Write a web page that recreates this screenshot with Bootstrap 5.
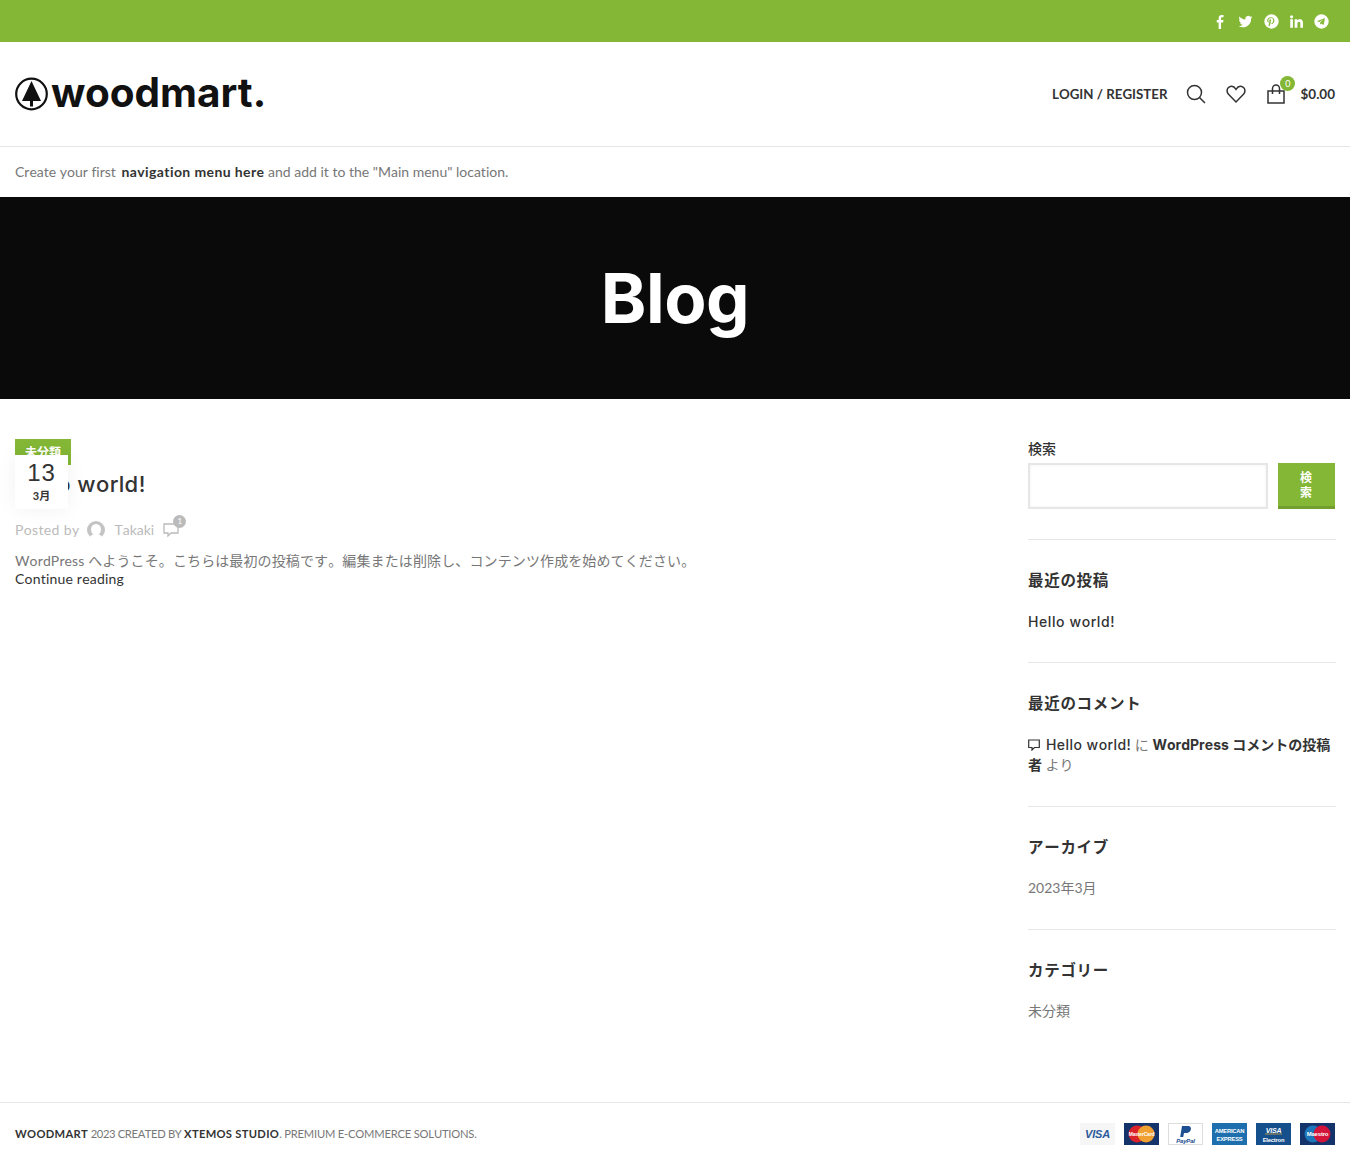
<!DOCTYPE html>
<html lang="ja">
<head>
  <meta charset="UTF-8" />
  <meta name="viewport" content="width=device-width, initial-scale=1.0" />
  <title>Blog – woodmart</title>
  <link rel="stylesheet" href="https://cdn.jsdelivr.net/npm/bootstrap@5.3.3/dist/css/bootstrap.min.css" />
  <style>
    body {
      font-family: Lato, "Noto Sans CJK JP", sans-serif;
      font-size: 14px;
      line-height: 18px;
      color: #777;
      background: #fff;
      min-height: 1165px;
      font-variant-ligatures: none;
      font-kerning: none;
    }
    a { color: #333; text-decoration: none; }
    .wm-topbar { height: 42px; background: #83b735; padding: 0 20px 0 15px; gap: 9px; }
    .wm-topbar svg { width: 15px; height: 15px; fill: #fff; display: block; }
    .wm-social { width: 16.4px; display: flex; justify-content: center; }
    .wm-header { height: 105px; padding: 0 15px; border-bottom: 1px solid #e6e6e6; }
    .wm-logo { gap: 3px; }
    .wm-logo-text {
      font-family: Inter, sans-serif;
      font-weight: 700;
      font-size: 40.5px;
      line-height: 40px;
      color: #111;
      margin-bottom: 3px;
      font-kerning: normal;
    }
    .wm-login { font-size: 13.3px; font-weight: 700; color: #333; margin-right: 19px; }
    .wm-icon { width: 20px; height: 20px; fill: none; stroke: #333; stroke-width: 1.5; display: block; }
    .wm-icon-link { margin-right: 20px; }
    .wm-cart-link { margin-right: 14px; }
    .wm-cart-badge {
      position: absolute; top: -8px; right: -9px;
      width: 15px; height: 15px; border-radius: 50%;
      background: #83b735; color: #fff; font-size: 9px; line-height: 15px; text-align: center;
    }
    .wm-price { font-weight: 700; color: #333; font-size: 13.5px; }
    .wm-menu-hint { height: 50px; padding: 0 15px; }
    .wm-menu-hint a { font-weight: 700; letter-spacing: .4px; margin-left: 2px; }
    .wm-hero { height: 202px; background: #0a0a0a; }
    .wm-hero h1 {
      font-family: Inter, sans-serif;
      font-weight: 700; font-size: 69px; letter-spacing: -.4px; color: #fff; margin: 0;
      font-kerning: normal;
    }
    .wm-main { height: 703px; }
    .wm-content { padding: 40px 15px 0; position: relative; }
    .wm-cat {
      display: inline-block; width: 56px; height: 26px; background: #83b735; color: #fff;
      font-size: 12px; font-weight: 700; text-align: center; line-height: 28px; vertical-align: top;
    }
    .wm-date {
      position: absolute; left: 15px; top: 56px; width: 53px; height: 54px;
      background: #fff; box-shadow: 0 0 20px rgba(0,0,0,.06); text-align: center; color: #333;
    }
    .wm-date-day { font-size: 24px; line-height: 24px; letter-spacing: 1px; padding-top: 6px; font-family: "Liberation Sans", sans-serif; }
    .wm-date-month { font-size: 11px; font-weight: 700; line-height: 14px; margin-top: 4px; }
    .wm-title {
      font-family: Inter, sans-serif; font-weight: 500; font-size: 22px; line-height: 28px;
      color: #333; margin: 5px 0 0; letter-spacing: .45px;
    }
    .wm-meta { color: #bbb; margin-top: 21px; height: 22px; }
    .wm-meta-by { letter-spacing: .35px; }
    .wm-avatar { width: 18px; height: 18px; margin: 0 9px 0 8px; }
    .wm-comments { position: relative; margin-left: 9px; }
    .wm-comments svg { width: 16px; height: 16px; fill: none; stroke: #bbb; stroke-width: 1.3; display: block; }
    .wm-comments span {
      position: absolute; top: -7px; right: -7px; width: 13px; height: 13px; border-radius: 50%;
      background: #bbb; color: #fff; font-size: 8px; line-height: 13px; text-align: center;
    }
    .wm-excerpt { margin: 11px 0 0; letter-spacing: .12px; }
    .wm-excerpt a { letter-spacing: .2px; }
    .wm-side { padding: 40px 14.5px 0 15.5px; }
    .wm-block { border-bottom: 1px solid #e6e6e6; padding-bottom: 30px; margin-bottom: 30px; }
    .wm-block:last-child { border-bottom: 0; }
    .wm-search-label { font-weight: 500; color: #333; display: block; height: 24px; line-height: 20px; }
    .wm-input { width: 240px; height: 46px; border: 2px solid #e6e6e6; border-radius: 0; background: #fff; box-shadow: inset 0 0 3px rgba(0,0,0,.06); }
    .wm-search-btn {
      width: 57px; height: 46px; background: #83b735; color: #fff; border: 0; border-bottom: 3px solid #739f2e;
      border-radius: 0; font-size: 12px; font-weight: 700; line-height: 15px; padding: 0 20px; margin-right: 1px;
    }
    .wm-widget-title { font-size: 15.5px; line-height: 20px; font-weight: 700; color: #333; margin: 0 0 20px; letter-spacing: .7px; }
    .wm-widget-link { display: block; height: 22px; font-family: Inter, sans-serif; font-weight: 500; color: #333; font-size: 14px; line-height: 24px; letter-spacing: .6px; }
    .wm-comment-line { font-size: 14px; line-height: 20px; padding-top: 2px; margin-bottom: 1px; }
    .wm-comment-line a { font-family: Inter, "Noto Sans CJK JP", sans-serif; font-weight: 500; color: #333; }
    .wm-comment-line a.wm-post-link { letter-spacing: .45px; }
    .wm-comment-line a.wm-author { font-weight: 700; }
    .wm-comment-line svg { width: 12px; height: 12px; fill: none; stroke: #333; stroke-width: 1.2; margin-right: 6px; vertical-align: -1px; }
    .wm-plain { line-height: 22px; }
    .wm-footer { height: 63px; border-top: 1px solid #e6e6e6; padding: 0 15px; font-size: 11.2px; letter-spacing: -.2px; }
    .wm-footer b { color: #333; font-weight: 700; letter-spacing: .3px; }
    .wm-footer-created { letter-spacing: -.35px; }
    .wm-pay { gap: 9px; }
    .wm-pay svg { width: 35px; height: 22px; display: block; font-family: "Liberation Sans", sans-serif; font-weight: 700; }
  </style>
</head>
<body>

  <div class="wm-topbar d-flex align-items-center justify-content-end">
    <span class="wm-social"><svg viewBox="0 0 16 16"><path d="M6 16V9H4V6.3h2V4.4C6 2.2 7.300 1 9.300 1c.9 0 1.700.1 1.900.1v2.400H9.900C8.800 3.500 8.600 4 8.600 4.800v1.500h2.600L10.800 9H8.600v7z"/></svg></span>
    <span class="wm-social"><svg viewBox="0 0 24 24"><path d="M23 5.100c-.8.4-1.700.6-2.600.7.900-.6 1.600-1.400 2-2.500-.9.500-1.900.9-2.900 1.100A4.600 4.600 0 0 0 11.700 8.600C7.900 8.400 4.500 6.600 2.300 3.800c-1.200 2.100-.6 4.800 1.400 6.100-.7 0-1.400-.2-2.100-.6 0 2.200 1.600 4.200 3.700 4.600-.7.200-1.400.2-2.100.1.600 1.900 2.300 3.200 4.300 3.200A9.300 9.300 0 0 1 .8 19.100 13 13 0 0 0 20.900 7.500c.9-.6 1.600-1.400 2.100-2.400z"/></svg></span>
    <span class="wm-social"><svg viewBox="0 0 24 24"><path fill-rule="evenodd" d="M12 .5a11.500 11.500 0 1 0 0 23 11.500 11.500 0 0 0 0-23zm.8 14.700c-1 0-1.900-.5-2.300-1.200l-.8 3c-.3 1-.9 2.100-1.400 2.800l-.8-.4c-.1-.9-.1-1.900.1-2.700l1.100-4.700s-.3-.6-.3-1.400c0-1.300.8-2.300 1.700-2.300.8 0 1.200.6 1.200 1.300 0 .8-.5 2-.8 3.100-.2.900.5 1.700 1.400 1.700 1.700 0 2.900-2.100 2.900-4.600 0-1.900-1.300-3.300-3.600-3.300-2.600 0-4.300 2-4.300 4.100 0 .7.200 1.300.6 1.700.2.200.2.300.1.500l-.2.700c-.1.200-.2.300-.5.200-1.200-.5-1.800-1.800-1.800-3.300 0-2.400 2.100-5.300 6.100-5.300 3.300 0 5.500 2.400 5.500 5 0 3.400-1.900 6-4.700 6z"/></svg></span>
    <span class="wm-social"><svg viewBox="0 0 24 24"><path d="M2 8.500h4.300V22H2zM4.100 2a2.500 2.500 0 1 1 0 5 2.500 2.500 0 0 1 0-5zM9 8.500h4v1.900c.6-1.100 2-2.200 4.200-2.200 4.400 0 5.200 2.900 5.200 6.700V22h-4.300v-6.300c0-1.500 0-3.500-2.100-3.500s-2.500 1.700-2.500 3.400V22H9z"/></svg></span>
    <span class="wm-social"><svg viewBox="0 0 24 24"><path fill-rule="evenodd" d="M12 .5a11.500 11.500 0 1 0 0 23 11.500 11.500 0 0 0 0-23zm5.400 7.100-1.900 9c-.1.600-.5.800-1 .5l-2.900-2.100-1.400 1.300c-.2.200-.3.300-.6.300l.2-2.900 5.300-4.800c.2-.2 0-.3-.3-.1l-6.500 4.100-2.800-.9c-.6-.2-.6-.6.100-.9l11-4.200c.5-.2 1 .1.800.7z"/></svg></span>
  </div>

  <header class="wm-header d-flex align-items-center justify-content-between">
    <a class="wm-logo d-flex align-items-center" href="#">
      <svg width="33" height="34" viewBox="0 0 33 34">
        <circle cx="16.500" cy="17" r="15.300" fill="none" stroke="#111" stroke-width="2.200"/>
        <path d="M16.500 4 26 24H18v5.500h-3V24H7z" fill="#111"/>
      </svg>
      <span class="wm-logo-text">woodmart.</span>
    </a>
    <div class="d-flex align-items-center">
      <a class="wm-login" href="#">LOGIN / REGISTER</a>
      <a href="#" class="wm-icon-link"><svg class="wm-icon" viewBox="0 0 20 20"><circle cx="8.500" cy="8.500" r="7"/><path d="m13.500 13.500 5.500 5.500"/></svg></a>
      <a href="#" class="wm-icon-link"><svg class="wm-icon" viewBox="0 0 20 20"><path d="M10 18 2.500 10.300C.3 8 .8 4.500 3 3.100c2.500-1.500 5.300-.5 7 2.200 1.700-2.700 4.500-3.700 7-2.200 2.200 1.400 2.700 4.900.5 7.200z"/></svg></a>
      <a href="#" class="position-relative wm-cart-link"><svg class="wm-icon" viewBox="0 0 20 20"><path d="M2 7h16v12H2zM6.500 10V4.500a3.500 3.500 0 0 1 7 0V10"/></svg><span class="wm-cart-badge">0</span></a>
      <span class="wm-price">$0.00</span>
    </div>
  </header>

  <div class="wm-menu-hint d-flex align-items-center">
    <span>Create your first <a href="#">navigation menu here</a> and add it to the "Main menu" location.</span>
  </div>

  <div class="wm-hero d-flex align-items-center justify-content-center">
    <h1>Blog</h1>
  </div>

  <main class="wm-main row g-0">
    <div class="col-9 wm-content">
      <a class="wm-cat" href="#">未分類</a>
      <div class="wm-date">
        <div class="wm-date-day">13</div>
        <div class="wm-date-month">3月</div>
      </div>
      <h2 class="wm-title">Hello world!</h2>
      <div class="wm-meta d-flex align-items-center">
        <span class="wm-meta-by">Posted by</span>
        <svg class="wm-avatar" viewBox="0 0 18 18"><circle cx="9" cy="9" r="9" fill="#c4c4c4"/><ellipse cx="9" cy="8.500" rx="5" ry="5.500" fill="#fff"/><path d="M2 18c1-4 4-5 7-5s6 1 7 5z" fill="#fff"/></svg>
        <span>Takaki</span>
        <span class="wm-comments"><svg viewBox="0 0 16 16"><path d="M1 2h14v9H8l-3 3v-3H1z"/></svg><span>1</span></span>
      </div>
      <p class="wm-excerpt">WordPress へようこそ。こちらは最初の投稿です。編集または削除し、コンテンツ作成を始めてください。<br><a href="#">Continue reading</a></p>
    </div>

    <aside class="col-3 wm-side">
      <div class="wm-block">
        <label class="wm-search-label">検索</label>
        <div class="d-flex gap-2 justify-content-between">
          <input class="wm-input" type="text" aria-label="検索" />
          <button class="wm-search-btn" type="button">検索</button>
        </div>
      </div>
      <div class="wm-block">
        <h5 class="wm-widget-title">最近の投稿</h5>
        <a class="wm-widget-link" href="#">Hello world!</a>
      </div>
      <div class="wm-block">
        <h5 class="wm-widget-title">最近のコメント</h5>
        <div class="wm-comment-line"><svg viewBox="0 0 12 12"><path d="M.7 1h10.600v7.500H6.500L4 11V8.500H.7z"/></svg><a class="wm-post-link" href="#">Hello world!</a> に <a class="wm-author" href="#">WordPress コメントの投稿</a><a class="wm-author" href="#">者</a> より</div>
      </div>
      <div class="wm-block">
        <h5 class="wm-widget-title">アーカイブ</h5>
        <div class="wm-plain">2023年3月</div>
      </div>
      <div class="wm-block">
        <h5 class="wm-widget-title">カテゴリー</h5>
        <div class="wm-plain">未分類</div>
      </div>
    </aside>
  </main>

  <footer class="wm-footer d-flex align-items-center justify-content-between">
    <div><b>WOODMART</b> <span class="wm-footer-created">2023 CREATED BY</span> <b>XTEMOS STUDIO</b>. PREMIUM E-COMMERCE SOLUTIONS.</div>
    <div class="wm-pay d-flex">
      <svg viewBox="0 0 35 22"><rect width="35" height="22" fill="#f6f6f6"/><text x="17.500" y="15" text-anchor="middle" font-size="11" font-style="italic" fill="#2a5a9c">VISA</text></svg>
      <svg viewBox="0 0 35 22"><rect width="35" height="22" fill="#15336b"/><circle cx="13" cy="11" r="8.500" fill="#d9222a"/><circle cx="22" cy="11" r="8.500" fill="#f0a030"/><text x="17.500" y="13" text-anchor="middle" font-size="5" fill="#fff">MasterCard</text></svg>
      <svg viewBox="0 0 35 22"><rect x=".5" y=".5" width="34" height="21" fill="#fff" stroke="#ddd"/><path d="M14 3h6c3 0 3.500 2.500 2.500 4.500S19.500 10 17.500 10h-1.500l-.8 4h-3z" fill="#1d4f91"/><text x="17.500" y="20" text-anchor="middle" font-size="6" font-style="italic" fill="#1d4f91">PayPal</text></svg>
      <svg viewBox="0 0 35 22"><rect width="35" height="22" fill="#1d70ad"/><text x="17.500" y="9.500" text-anchor="middle" font-size="5.800" fill="#fff">AMERICAN</text><text x="17.500" y="18" text-anchor="middle" font-size="5.800" fill="#fff">EXPRESS</text></svg>
      <svg viewBox="0 0 35 22"><rect width="35" height="22" fill="#15508d"/><text x="17.500" y="9.500" text-anchor="middle" font-size="7" font-style="italic" fill="#fff">VISA</text><path d="M9 11h17" stroke="#d9a437" stroke-width=".8"/><text x="17.500" y="18.500" text-anchor="middle" font-size="5.800" fill="#fff">Electron</text></svg>
      <svg viewBox="0 0 35 22"><rect width="35" height="22" fill="#15336b"/><circle cx="13" cy="11" r="8.500" fill="#1c76bc"/><circle cx="22" cy="11" r="8.500" fill="#d2143a"/><text x="17.500" y="13" text-anchor="middle" font-size="6" fill="#fff">Maestro</text></svg>
    </div>
  </footer>

  <script src="https://cdn.jsdelivr.net/npm/bootstrap@5.3.3/dist/js/bootstrap.bundle.min.js"></script>
</body>
</html>
